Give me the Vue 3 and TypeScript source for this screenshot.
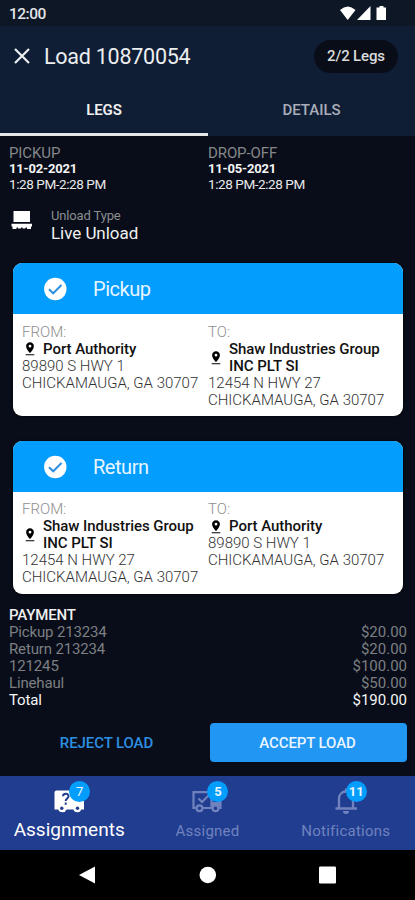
<script setup lang="ts">
interface Stop { name: string[]; street: string; city: string }
interface Leg { title: string; from: Stop; to: Stop }
interface Payment { label: string; amount: string; total?: boolean }

const port: Stop = { name: ['Port Authority'], street: '89890 S HWY 1', city: 'CHICKAMAUGA, GA 30707' }
const shaw: Stop = { name: ['Shaw Industries Group', 'INC PLT SI'], street: '12454 N HWY 27', city: 'CHICKAMAUGA, GA 30707' }

const legs: Leg[] = [
  { title: 'Pickup', from: port, to: shaw },
  { title: 'Return', from: shaw, to: port },
]

const windows = [
  { label: 'PICKUP', date: '11-02-2021', time: '1:28 PM-2:28 PM' },
  { label: 'DROP-OFF', date: '11-05-2021', time: '1:28 PM-2:28 PM' },
]

const payments: Payment[] = [
  { label: 'Pickup 213234', amount: '$20.00' },
  { label: 'Return 213234', amount: '$20.00' },
  { label: '121245', amount: '$100.00' },
  { label: 'Linehaul', amount: '$50.00' },
  { label: 'Total', amount: '$190.00', total: true },
]

const sides = (leg: Leg) => [
  { label: 'FROM:', stop: leg.from },
  { label: 'TO:', stop: leg.to },
]
</script>

<template>
  <div class="screen">
    <div class="status">
      <span class="clock">12:00</span>
      <svg class="status-icons" width="50" height="16" viewBox="0 0 50 16">
        <path d="M0 4Q7.700 -3 15.500 4L7.700 14Z" />
        <path d="M17 14L30.500 0V14Z" />
        <path d="M39.500 0h4v1.500h2.500v12.500h-9.500v-12.500h3z" />
      </svg>
    </div>

    <header class="appbar">
      <svg class="close" width="16" height="16" viewBox="0 0 16 16"><path d="M1 1L15 15M15 1L1 15" /></svg>
      <h1 class="title">Load 10870054</h1>
      <span class="pill">2/2 Legs</span>
    </header>

    <nav class="tabs">
      <span class="tab active">LEGS</span>
      <span class="tab">DETAILS</span>
    </nav>

    <main class="body">
      <section class="windows">
        <div v-for="w in windows" :key="w.label" class="window">
          <div class="w-label">{{ w.label }}</div>
          <div class="w-date">{{ w.date }}</div>
          <div class="w-time">{{ w.time }}</div>
        </div>
      </section>

      <section class="unload">
        <svg width="22" height="20" viewBox="0 0 22 20">
          <path d="M2.500 0h16.500v11h-16.500zM0.500 12.700h20.500v2.800h-1v2.500h-4v-1.500h-1.500v1h-3v-1h-1.500v1h-3v-1h-1.500v1.500h-4v-2.500h-1z" />
        </svg>
        <div>
          <div class="u-label">Unload Type</div>
          <div class="u-value">Live Unload</div>
        </div>
      </section>

      <article v-for="leg in legs" :key="leg.title" class="card">
        <div class="card-head">
          <svg width="24" height="24" viewBox="0 0 24 24">
            <circle cx="12.300" cy="12" r="11.200" />
            <path d="M6 12.200L10.200 16.300L18.500 8" />
          </svg>
          <span>{{ leg.title }}</span>
        </div>
        <div class="card-body">
          <div v-for="side in sides(leg)" :key="side.label" class="side">
            <div class="s-label">{{ side.label }}</div>
            <div class="place">
              <svg width="10" height="14" viewBox="0 0 10 14">
                <path fill-rule="evenodd" d="M5 0.300C2.700 0.300 1.100 2 1.100 4.200C1.100 7 5 11 5 11S8.900 7 8.900 4.200C8.900 2 7.300 0.300 5 0.300ZM5 2.800a1.400 1.400 0 1 1 0 2.800a1.400 1.400 0 0 1 0-2.800z" />
                <path d="M0.700 12.300h8.600v1h-8.600z" />
              </svg>
              <div class="name"><div v-for="line in side.stop.name" :key="line">{{ line }}</div></div>
            </div>
            <div class="addr">{{ side.stop.street }}</div>
            <div class="addr">{{ side.stop.city }}</div>
          </div>
        </div>
      </article>

      <section class="payment">
        <div class="p-title">PAYMENT</div>
        <div v-for="p in payments" :key="p.label" class="p-row" :class="{ total: p.total }">
          <span>{{ p.label }}</span><span class="amount">{{ p.amount }}</span>
        </div>
      </section>

      <section class="actions">
        <button class="btn reject">REJECT LOAD</button>
        <button class="btn accept">ACCEPT LOAD</button>
      </section>
    </main>

    <nav class="bottom">
      <div class="item selected">
        <div class="icon">
          <svg width="32" height="24" viewBox="0 0 32 24">
            <path fill="#fff" d="M3.500 0.500h17.500v4.500h6l4 6v8.500h-3a4 4 0 0 1-7.600 0h-6.900a4 4 0 0 1-7.600 0H1.500V2.500a2 2 0 0 1 2-2z" />
            <circle cx="8.800" cy="18.500" r="3.500" fill="#fff" />
            <circle cx="8.800" cy="18.300" r="1.700" fill="#213d8f" />
            <circle cx="24.500" cy="18.500" r="3.500" fill="#fff" />
            <circle cx="24.500" cy="18.300" r="1.700" fill="#213d8f" />
            <path d="M10 6.300C10 2.800 15.500 2.800 15.500 6.200C15.500 8.500 12.700 8.700 12.700 11M12.700 12.500v2.200" fill="none" stroke="#213d8f" stroke-width="2" />
          </svg>
          <span class="badge light">7</span>
        </div>
        <span class="caption">Assignments</span>
      </div>
      <div class="item">
        <div class="icon">
          <svg width="32" height="24" viewBox="0 0 32 24" fill="none" stroke="#7083bf" stroke-width="2.200">
            <path d="M5 18H2.500V2.200h18V18h-9M20 7h5l4.500 5v6h-2M20 18h1" />
            <circle cx="8.500" cy="18.200" r="2.900" />
            <circle cx="24.500" cy="18.200" r="2.900" />
            <path d="M7.500 8.500l3.500 3.500l6.500-6.500" />
            <path d="M21 12h9v4h-9z" fill="#7083bf" stroke="none" />
          </svg>
          <span class="badge">5</span>
        </div>
        <span class="caption">Assigned</span>
      </div>
      <div class="item">
        <div class="icon bell">
          <svg width="24" height="28" viewBox="0 0 24 28" fill="none" stroke="#7083bf" stroke-width="2.300">
            <path d="M5 20.500V12C5 7.500 8 4.500 12 4.500S19 7.500 19 12V20.500M1.500 21.500h21.500M12 1.500v3" />
            <path d="M9 24h6a3 3 0 0 1-6 0z" fill="#7083bf" stroke="none" />
          </svg>
          <span class="badge">11</span>
        </div>
        <span class="caption">Notifications</span>
      </div>
    </nav>

    <div class="system">
      <svg width="18" height="18" viewBox="0 0 18 18"><path d="M0 9L16 0.500V17.500Z" /></svg>
      <svg width="18" height="18" viewBox="0 0 18 18"><circle cx="8.800" cy="9" r="8.300" /></svg>
      <svg width="18" height="18" viewBox="0 0 18 18"><rect x="0" y="0.500" width="17" height="17" rx="1.200" /></svg>
    </div>
  </div>
</template>

<style>
body { background: #080d19; }
</style>

<style scoped>
.screen { width: 415px; height: 900px; display: flex; flex-direction: column; background: #080d19; font-family: Roboto, "Liberation Sans", sans-serif; overflow: hidden; }
.status { height: 26px; display: flex; align-items: center; justify-content: space-between; padding: 1px 25px 0 9px; box-sizing: border-box; background: #0d1726; color: #e2e4e6; }
.clock { font-size: 15.500px; font-weight: 500; letter-spacing: -0.500px; }
.status-icons { fill: #fff; }
.appbar { height: 60px; display: flex; align-items: center; padding: 0 17px 0 14px; background: #101e35; color: #eceef0; }
.close { fill: none; stroke: #eceef0; stroke-width: 2.200; margin-right: 14px; }
.title { flex: 1; margin: 0; font-size: 21.500px; font-weight: 400; letter-spacing: -0.250px; }
.pill { width: 84px; height: 33px; border-radius: 17px; background: #080d18; color: #dcdcdc; font-size: 15px; font-weight: 500; letter-spacing: -0.150px; display: flex; align-items: center; justify-content: center; }
.tabs { height: 50px; display: grid; grid-template-columns: 208px 207px; background: #101e35; }
.tab { display: flex; align-items: center; justify-content: center; box-sizing: border-box; border-bottom: 3px solid transparent; font-size: 15px; font-weight: 500; color: #a9adb9; }
.tab.active { color: #f1f1f1; font-weight: 600; letter-spacing: -0.150px; border-bottom-color: #e6e8e8; }
.body { height: 640px; display: flex; flex-direction: column; }
.windows { display: grid; grid-template-columns: 199px 1fr; padding: 9px 0 0 9px; }
.w-label { font-size: 15px; line-height: 17px; color: #858789; letter-spacing: -0.100px; }
.w-date { font-size: 13px; line-height: 14px; font-weight: 700; color: #f5f5f5; letter-spacing: -0.200px; }
.w-time { font-size: 13.500px; line-height: 16px; color: #e8e8e8; letter-spacing: -0.420px; }
.unload { height: 36px; display: flex; gap: 18px; margin: 15px 0 0 11px; }
.unload svg { margin-top: 4px; fill: #fff; }
.u-label { font-size: 13px; line-height: 17px; color: #8b8d90; letter-spacing: -0.150px; }
.u-value { font-size: 17px; line-height: 19px; color: #f0f0f0; letter-spacing: -0.050px; }
.card { margin: 20px 12px 0 13px; height: 153px; flex: none; border-radius: 9px; background: #fff; overflow: hidden; box-shadow: 0 0 3px #000; }
.card + .card { margin-top: 25px; }
.card-head { height: 51px; display: flex; align-items: center; gap: 26px; padding-left: 30px; background: #039dfe; color: #e8f5ff; font-size: 20px; letter-spacing: -0.450px; }
.card-head circle { fill: #fff; }
.card-head path { fill: none; stroke: #2d8fe0; stroke-width: 2; }
.card-body { display: grid; grid-template-columns: 186px 1fr; padding: 9.500px 0 0 9px; line-height: 17px; }
.card + .card .card-body { padding-top: 9px; }
.s-label { font-size: 15px; font-weight: 300; color: #8e8e8e; }
.place { display: flex; align-items: center; gap: 8px; padding-left: 3px; }
.name { font-size: 15px; font-weight: 500; color: #111; white-space: nowrap; letter-spacing: -0.050px; }
.addr { font-size: 15px; font-weight: 300; color: #333; white-space: nowrap; }
.payment { padding: 13px 8px 0 9px; font-size: 15px; line-height: 17px; color: #7d7f83; }
.p-title { color: #f0f0f0; font-weight: 500; letter-spacing: -0.150px; }
.p-row { display: flex; justify-content: space-between; letter-spacing: -0.150px; }
.amount { letter-spacing: 0; }
.p-row.total { color: #f6f6f6; }
.actions { display: flex; padding: 14px 8px 0 5px; }
.btn { height: 39px; border: 0; padding: 0 2px 0 0; border-radius: 4px; font-family: inherit; font-size: 15px; font-weight: 500; letter-spacing: -0.100px; }
.reject { width: 205px; background: transparent; color: #2d8fe0; }
.accept { width: 197px; background: #2196f3; color: #e8f5ff; }
.bottom { height: 74px; display: grid; grid-template-columns: repeat(3, 1fr); background: #213d8f; color: #7083bf; }
.item { display: flex; flex-direction: column; align-items: center; }
.icon { position: relative; width: 32px; height: 28px; margin-top: 14px; display: flex; justify-content: center; }
.bell svg { margin-top: -3px; }
.badge { position: absolute; left: 16px; top: -9px; width: 21px; height: 21px; border-radius: 50%; background: #039dfe; color: #e8f5ff; font-size: 13px; font-weight: 700; display: flex; align-items: center; justify-content: center; }
.badge.light { font-weight: 400; }
.caption { font-size: 15px; line-height: 18px; margin-top: 4px; letter-spacing: 0.250px; }
.selected .caption { font-size: 19px; line-height: 22px; margin-top: 1px; color: #fff; letter-spacing: 0; }
.system { height: 50px; display: flex; align-items: center; justify-content: center; gap: 102px; background: #000; }
.system svg { fill: #fff; }
</style>
